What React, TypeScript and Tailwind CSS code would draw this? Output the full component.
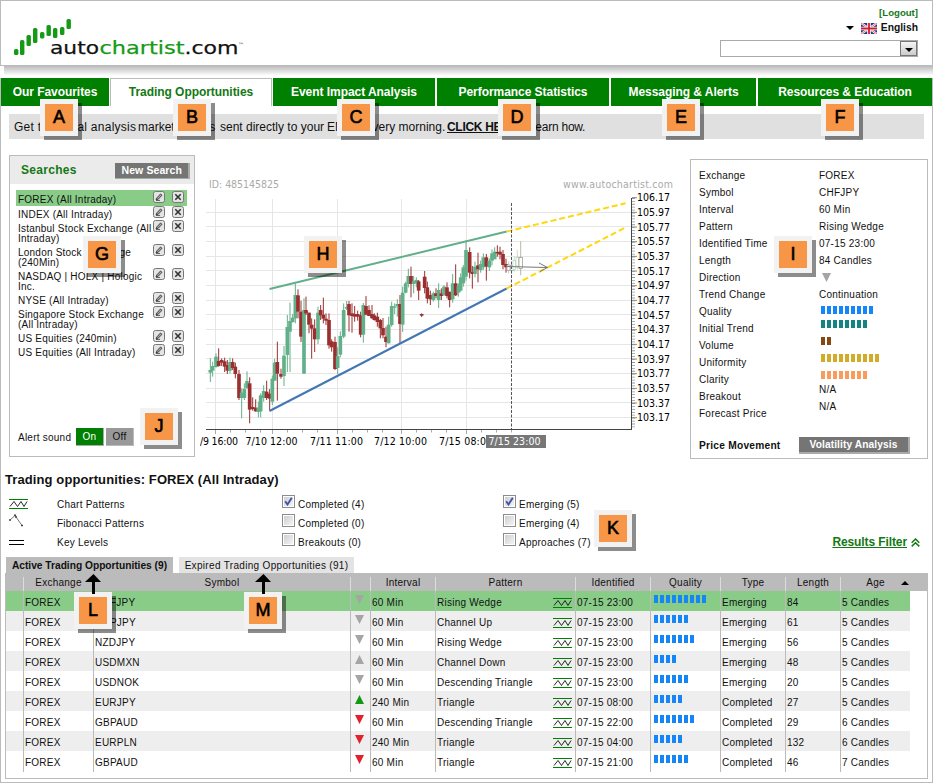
import { ReactNode } from "react";

interface Opportunity {
  symbol: string;
  direction: "up" | "down";
  tone: string;
  interval: string;
  pattern: string;
  identified: string;
  quality: number;
  type: string;
  length: number;
  age: string;
}

const tabs = [
  { label: "Our Favourites", style: "w-[108px] bg-[#008000] pt-px text-white" },
  { label: "Trading Opportunities", style: "ml-px w-[162px] border border-b-0 border-[#bbb] bg-white text-[#147814]" },
  { label: "Event Impact Analysis", style: "ml-px w-[162px] bg-[#008000] pt-px text-white" },
  { label: "Performance Statistics", style: "ml-[2px] w-[172px] bg-[#008000] pt-px text-white" },
  { label: "Messaging & Alerts", style: "ml-[2px] w-[145px] bg-[#008000] pt-px text-white" },
  { label: "Resources & Education", style: "ml-[2px] w-[174px] bg-[#008000] pt-px text-white" },
];

const searches = [
  ["FOREX (All Intraday)"],
  ["INDEX (All Intraday)"],
  ["Istanbul Stock Exchange (All", "Intraday)"],
  ["London Stock Exchange", "(240Min)"],
  ["NASDAQ | HOLX | Hologic", "Inc."],
  ["NYSE (All Intraday)"],
  ["Singapore Stock Exchange", "(All Intraday)"],
  ["US Equities (240min)"],
  ["US Equities (All Intraday)"],
];

const detailLabels = [
  "Exchange", "Symbol", "Interval", "Pattern", "Identified Time", "Length", "Direction", "Trend Change",
  "Quality", "Initial Trend", "Volume", "Uniformity", "Clarity", "Breakout", "Forecast Price",
];

const legend = [
  { icon: "pattern", name: "Chart Patterns", left: "Completed (4)", right: "Emerging (5)", checked: true },
  { icon: "fibonacci", name: "Fibonacci Patterns", left: "Completed (0)", right: "Emerging (4)", checked: false },
  { icon: "levels", name: "Key Levels", left: "Breakouts (0)", right: "Approaches (7)", checked: false },
];

const grey = "#a5a5a5";
const red = "#e3202c";

const opportunities: Opportunity[] = [
  { symbol: "CHFJPY", direction: "down", tone: grey, interval: "60 Min", pattern: "Rising Wedge", identified: "07-15 23:00", quality: 9, type: "Emerging", length: 84, age: "5 Candles" },
  { symbol: "GBPJPY", direction: "down", tone: grey, interval: "60 Min", pattern: "Channel Up", identified: "07-15 23:00", quality: 6, type: "Emerging", length: 61, age: "5 Candles" },
  { symbol: "NZDJPY", direction: "down", tone: grey, interval: "60 Min", pattern: "Rising Wedge", identified: "07-15 23:00", quality: 7, type: "Emerging", length: 56, age: "5 Candles" },
  { symbol: "USDMXN", direction: "up", tone: grey, interval: "60 Min", pattern: "Channel Down", identified: "07-15 23:00", quality: 4, type: "Emerging", length: 48, age: "5 Candles" },
  { symbol: "USDNOK", direction: "down", tone: grey, interval: "60 Min", pattern: "Descending Triangle", identified: "07-15 23:00", quality: 6, type: "Emerging", length: 20, age: "5 Candles" },
  { symbol: "EURJPY", direction: "up", tone: "#119911", interval: "240 Min", pattern: "Triangle", identified: "07-15 08:00", quality: 5, type: "Completed", length: 27, age: "5 Candles" },
  { symbol: "GBPAUD", direction: "down", tone: red, interval: "60 Min", pattern: "Descending Triangle", identified: "07-15 22:00", quality: 7, type: "Completed", length: 29, age: "6 Candles" },
  { symbol: "EURPLN", direction: "down", tone: red, interval: "240 Min", pattern: "Triangle", identified: "07-15 04:00", quality: 5, type: "Completed", length: 132, age: "6 Candles" },
  { symbol: "GBPAUD", direction: "down", tone: red, interval: "60 Min", pattern: "Triangle", identified: "07-15 21:00", quality: 6, type: "Completed", length: 46, age: "7 Candles" },
];

// [x, high, low, body top, body bottom, rising] in thirds of a pixel
const candles = [
  [31, 565, 636, 600, 608, 1], [38, 575, 620, 588, 602, 1], [48, 550, 593, 560, 591, 1], [56, 535, 590, 573, 588, 0],
  [65, 565, 588, 570, 578, 0], [74, 563, 606, 574, 590, 0], [82, 570, 612, 585, 602, 0], [90, 563, 610, 576, 602, 1],
  [98, 565, 600, 576, 594, 0], [106, 578, 625, 590, 612, 0], [117, 600, 690, 612, 684, 0], [125, 655, 745, 668, 684, 1],
  [133, 640, 690, 657, 684, 1], [141, 604, 655, 633, 655, 1], [149, 622, 760, 640, 719, 0], [158, 682, 722, 711, 717, 0],
  [167, 688, 725, 713, 724, 0], [175, 695, 742, 713, 726, 1], [182, 670, 742, 676, 724, 1], [191, 646, 695, 663, 684, 1],
  [200, 632, 690, 665, 684, 0], [209, 657, 722, 671, 686, 0], [217, 617, 705, 626, 695, 1], [224, 566, 632, 578, 632, 1],
  [232, 515, 692, 576, 611, 0], [243, 596, 626, 612, 620, 0], [252, 528, 648, 557, 618, 1], [262, 435, 606, 471, 555, 1],
  [270, 398, 606, 453, 485, 1], [278, 432, 458, 443, 456, 1], [286, 340, 460, 375, 445, 1], [294, 358, 445, 376, 425, 0],
  [303, 392, 516, 425, 500, 0], [312, 385, 612, 420, 611, 1], [318, 380, 435, 420, 430, 0], [327, 428, 490, 428, 464, 0],
  [335, 445, 566, 464, 476, 0], [344, 448, 546, 475, 508, 0], [354, 410, 522, 428, 508, 1], [362, 405, 450, 420, 436, 0],
  [370, 383, 460, 434, 446, 0], [378, 430, 465, 446, 452, 0], [387, 430, 536, 450, 526, 0], [395, 508, 545, 514, 532, 0],
  [405, 500, 600, 516, 597, 0], [413, 532, 612, 558, 594, 1], [421, 484, 562, 498, 554, 1], [431, 400, 505, 420, 500, 1],
  [440, 393, 420, 411, 416, 1], [447, 393, 485, 402, 436, 0], [456, 400, 488, 430, 438, 0], [464, 408, 455, 432, 440, 0],
  [473, 422, 452, 432, 440, 0], [482, 425, 502, 436, 494, 0], [490, 399, 518, 405, 494, 1], [498, 378, 436, 408, 434, 0],
  [507, 406, 438, 420, 438, 0], [516, 405, 446, 432, 445, 0], [523, 430, 452, 436, 450, 0], [532, 428, 470, 440, 456, 0],
  [541, 447, 505, 450, 475, 0], [549, 444, 505, 474, 496, 0], [558, 470, 532, 500, 516, 0], [566, 440, 520, 464, 520, 1],
  [575, 395, 470, 408, 465, 1], [584, 400, 432, 409, 413, 1], [592, 388, 440, 402, 408, 1], [600, 375, 520, 402, 462, 0],
  [608, 350, 486, 368, 464, 1], [617, 335, 370, 340, 368, 1], [625, 296, 352, 318, 342, 1], [633, 290, 382, 318, 342, 0],
  [641, 318, 370, 333, 342, 1], [649, 322, 352, 330, 340, 1], [656, 330, 390, 334, 362, 0], [665, 430, 441, 432, 437, 0],
  [674, 303, 370, 320, 354, 0], [682, 335, 400, 352, 386, 0], [691, 362, 405, 375, 388, 0], [700, 365, 395, 370, 390, 1],
  [708, 355, 385, 370, 378, 0], [716, 340, 414, 360, 390, 1], [724, 355, 390, 370, 378, 0], [732, 345, 378, 350, 375, 1],
  [741, 337, 385, 352, 378, 0], [749, 370, 412, 365, 390, 0], [758, 312, 398, 340, 388, 1], [767, 283, 378, 340, 376, 0],
  [775, 340, 380, 347, 368, 1], [782, 310, 365, 322, 362, 1], [790, 285, 350, 292, 340, 1], [798, 212, 332, 240, 320, 1],
  [809, 232, 325, 246, 308, 0], [817, 288, 356, 306, 312, 0], [825, 275, 322, 290, 312, 1], [834, 248, 337, 286, 298, 0],
  [842, 272, 308, 282, 300, 1], [850, 250, 300, 262, 292, 1], [859, 252, 332, 262, 290, 0], [868, 265, 303, 272, 292, 1],
  [876, 238, 286, 250, 272, 1], [884, 232, 266, 245, 268, 1], [892, 226, 260, 246, 250, 0], [900, 230, 268, 245, 254, 0],
  [909, 240, 298, 252, 285, 0], [918, 266, 308, 282, 292, 0],
];

const prices = [
  "106.17", "105.97", "105.77", "105.57", "105.37", "105.17", "104.97", "104.77",
  "104.57", "104.37", "104.17", "103.97", "103.77", "103.57", "103.37", "103.17",
];

const callouts = [
  { letter: "A", place: "left-[40px] top-[99px]" },
  { letter: "B", place: "left-[173px] top-[99px]" },
  { letter: "C", place: "left-[337px] top-[99px]" },
  { letter: "D", place: "left-[498px] top-[99px]" },
  { letter: "E", place: "left-[662px] top-[99px]" },
  { letter: "F", place: "left-[821px] top-[99px]" },
  { letter: "G", place: "left-[83px] top-[236px]" },
  { letter: "H", place: "left-[304px] top-[236px]" },
  { letter: "I", place: "left-[774px] top-[236px]" },
  { letter: "J", place: "left-[140px] top-[408px]" },
  { letter: "K", place: "left-[594px] top-[510px]" },
  { letter: "L", place: "left-[74px] top-[592px]" },
  { letter: "M", place: "left-[244px] top-[592px]" },
];

function Logo() {
  const bars = [[14, 49, 5], [20, 40, 14], [26.5, 35, 10], [33, 28, 14], [40, 32, 5.5], [46.5, 25, 10], [53, 28, 9], [60, 27, 7], [66.5, 19, 9]];
  return (
    <svg width="245" height="64" className="block" fontFamily="'DejaVu Sans', sans-serif" fontSize="18.5">
      {bars.map(([x, y, h], index) => (
        <rect key={index} x={x - 1} y={y - 1} width="4.4" height={h + 1} rx="1.6" fill="#149a14" />
      ))}
      <text x="49" y="53" textLength="49" lengthAdjust="spacingAndGlyphs" fill="#111" stroke="#111" strokeWidth="0.25">auto</text>
      <text x="98.5" y="53" textLength="85" lengthAdjust="spacingAndGlyphs" fill="#149a14" stroke="#149a14" strokeWidth="0.25">chartist</text>
      <text x="183.5" y="53" textLength="54" lengthAdjust="spacingAndGlyphs" fill="#111" stroke="#111" strokeWidth="0.25">.com</text>
      <text x="237" y="45.5" fontSize="6" fill="#333">™</text>
    </svg>
  );
}

function Flag() {
  return (
    <svg width="16" height="11" viewBox="0 0 16 11">
      <rect width="16" height="11" fill="#26378a" />
      <path d="M0 0L16 11M16 0L0 11" stroke="#fff" strokeWidth="2.2" />
      <path d="M0 0L16 11M16 0L0 11" stroke="#d8303c" strokeWidth="0.7" />
      <path d="M8 0V11M0 5.5H16" stroke="#fff" strokeWidth="3.6" />
      <path d="M8 0V11M0 5.5H16" stroke="#d0202c" strokeWidth="1.8" />
    </svg>
  );
}

function PatternIcon() {
  return (
    <svg width="19" height="10" viewBox="0 0 19 10" className="block" fill="none">
      <path d="M0 .5H19M0 9.5H19" stroke="#008000" />
      <path d="M1 7.5L5 2.5L8.5 7.5L12 2.5L15 7.5L18 2.5" stroke="#111" strokeWidth="0.9" />
    </svg>
  );
}

function LegendIcon({ name }: { name: string }) {
  if (name === "pattern") return <PatternIcon />;
  if (name === "fibonacci")
    return (
      <svg width="15" height="13" viewBox="0 0 15 13" fill="none" className="-mt-1">
        <path d="M1 6L6 1.5L13 11.5" stroke="#777" />
        <path d="M0 6h2M5 1.2h2M6 3h2M12 11.5h2" stroke="#444" strokeWidth="1.4" />
      </svg>
    );
  return (
    <svg width="15" height="6" viewBox="0 0 15 6" className="mt-0.5">
      <path d="M0 .5H15M0 4.5H15" stroke="#000" />
    </svg>
  );
}

function Direction({ direction, tone }: { direction: "up" | "down"; tone: string }) {
  return (
    <svg width="9" height="9" viewBox="0 0 9 9" className="block">
      <path d={direction === "up" ? "M0 9H9L4.5 0Z" : "M0 0H9L4.5 9Z"} fill={tone} />
    </svg>
  );
}

function Bars({ count, color }: { count: number; color: string }) {
  return (
    <div className="flex gap-[2px]">
      {Array.from({ length: count }, (_, index) => (
        <span key={index} className={`h-2 w-1 ${color}`} />
      ))}
    </div>
  );
}

function Checkbox({ checked }: { checked: boolean }) {
  return (
    <span className="mt-px flex h-[13px] w-[13px] items-center justify-center border border-[#8c8c8c] bg-white p-px">
      <span className="h-full w-full bg-linear-to-br from-[#cfcfd2] to-[#f4f4f4]">
        {checked && (
          <svg width="9" height="9" viewBox="0 0 9 9" fill="none">
            <path d="M1.2 4.2L3.5 7.5L7.8 .8" stroke="#4055a8" strokeWidth="1.9" />
          </svg>
        )}
      </span>
    </span>
  );
}

function RowAction({ children }: { children: ReactNode }) {
  return (
    <svg width="12" height="12" viewBox="0 0 12 12" fill="none" className="block">
      <rect x=".5" y=".5" width="11" height="11" rx="2" fill="#e4e4e4" stroke="#777" />
      {children}
    </svg>
  );
}

function Chart() {
  return (
    <svg width="485" height="285" viewBox="0 0 485 285" className="block" fontFamily="'DejaVu Sans Condensed', 'DejaVu Sans', sans-serif" fontSize="10.5">
      <text x="9" y="18" fill="#aaa" textLength="70">ID: 485145825</text>
      <text x="363" y="18" fill="#aaa" textLength="110">www.autochartist.com</text>

      {/* Grid */}
      <g stroke="#e6e6e6" shapeRendering="crispEdges">
        {prices.slice(1).map((price, index) => (
          <line key={price} x1="6" x2="431" y1={42.3 + index * 14.667} y2={42.3 + index * 14.667} />
        ))}
        {[15.5, 72.5, 137.5, 201.5, 266.5].map((x) => (
          <line key={x} x1={x} x2={x} y1="29" y2="259" />
        ))}
      </g>

      {/* Candles */}
      <g transform="scale(0.33333)">
        {candles.map(([x, high, low, top, bottom, rising]) => (
          <g key={x} fill={rising ? "#62b08a" : "#99302f"}>
            <rect x={x - 1.5} y={high} width="3" height={low - high} />
            <rect x={x - 5.5} y={top} width="11" height={bottom - top} />
          </g>
        ))}
        <g fill="#fff" strokeWidth="2">
          <path d="M926 275V310M935 280V310" stroke="#aaa" />
          <rect x="921" y="285" width="9" height="16" stroke="#999" />
          <rect x="932" y="287" width="8" height="14" stroke="#999" />
          <path d="M943 260V305M952 240V300" stroke="#a9d5bd" />
          <rect x="939" y="272" width="8" height="26" stroke="#a9d5bd" />
          <rect x="948" y="262" width="8" height="26" stroke="#a9d5bd" />
          <path d="M962 214V316" stroke="#a08f82" />
          <rect x="957" y="262" width="10" height="34" stroke="#9a8a7e" />
        </g>
      </g>

      {/* Wedge and its projection */}
      <g fill="none" strokeWidth="2">
        <path d="M69.5 119L306.7 61.5" stroke="#62b08a" />
        <path d="M69.5 241L306.7 118.5" stroke="#4377b3" />
        <path d="M306.7 61.5L425.5 33.3M306.7 118.5L425.5 57.5" stroke="#ffd70f" strokeDasharray="6 3" />
      </g>
      <path d="M311.5 33V259" stroke="#555" strokeDasharray="3 1.5" />
      <path d="M306 96.5L347 97.5M339 93L347.5 97.5L340 101.5" stroke="#777" fill="none" />

      {/* Axes */}
      <path d="M6 259.5H431.5V28" stroke="#444" fill="none" shapeRendering="crispEdges" />
      <path d="M432 28.3H435" stroke="#777" />
      <path d="M433.5 28V259" stroke="#999" strokeWidth="3" strokeDasharray="0.8 2.13" />
      {[15.5, 72.5, 137.5, 201.5, 266.5].map((x) => (
        <path key={x} d={`M${x} 260v4M${x + 15} 260v2.5M${x + 30} 260v2.5M${x + 45} 260v2.5`} stroke="#aaa" fill="none" />
      ))}
      {prices.map((price, index) => (
        <g key={price}>
          <path d={`M432 ${27.7 + index * 14.667}h5`} stroke="#888" />
          <text x="437" y={31.3 + index * 14.667} textLength="33">{price}</text>
        </g>
      ))}
      <text x="0" y="275" textLength="38">/9 16:00</text>
      <text x="45.5" y="275" textLength="52">7/10 12:00</text>
      <text x="110" y="275" textLength="53">7/11 11:00</text>
      <text x="174" y="275" textLength="53">7/12 10:00</text>
      <text x="239" y="275" textLength="47">7/15 08:0</text>
      <rect x="286" y="265" width="60" height="13" fill="#777" />
      <text x="288.5" y="275" textLength="52" fill="#fff">7/15 23:00</text>
    </svg>
  );
}

function SearchPanel() {
  return (
    <section className="mt-4 ml-2 flex h-[302px] w-[186px] flex-col border border-[#bbb]">
      <div className="flex h-7 items-center justify-between bg-[#ebebeb] pr-1 pl-[11px]">
        <h2 className="text-[12px] font-bold tracking-[0.3px] text-[#147814]">Searches</h2>
        <button className="mt-px h-4 border-r-2 border-b border-[#aaa] bg-[#757575] px-[6px] text-[10.5px] leading-[14px] font-bold tracking-[0.1px] text-white">
          New Search
        </button>
      </div>
      <ul className="mt-[6px] ml-[6px] w-[171px] text-[10px] leading-[10px] tracking-[0.22px]">
        {searches.map((lines, index) => (
          <li
            key={index}
            className={`flex justify-between pr-[3px] pl-[2px] ${
              index === 0 ? "h-4 bg-[#88cc88] pt-px" : lines.length > 1 ? "h-6" : "h-[14px]"
            }`}
          >
            <div className="w-[135px] pt-1 whitespace-nowrap">
              {lines.map((line) => (
                <div key={line}>{line}</div>
              ))}
            </div>
            <div className="flex gap-[7px]">
              <RowAction>
                <path d="M3 9L4 6.8L7.5 3L9 4.3L5.4 8Z" stroke="#333" fill="#aaa" strokeWidth=".9" />
                <path d="M3 9.4H7" stroke="#333" strokeWidth=".8" />
              </RowAction>
              <RowAction>
                <path d="M3.3 3.3L8.7 8.7M8.7 3.3L3.3 8.7" stroke="#333" strokeWidth="1.6" />
              </RowAction>
            </div>
          </li>
        ))}
      </ul>
      <div className="mt-auto mb-[10px] flex items-center pl-2 text-[10px] tracking-[0.24px]">
        <span className="w-[58px]">Alert sound</span>
        <button className="h-[18px] w-[28px] border-r border-b border-[#aaa] bg-[#008000] text-white">On</button>
        <button className="ml-[2px] h-[18px] w-[28px] border-r border-b border-[#bbb] bg-[#999]">Off</button>
      </div>
    </section>
  );
}

function DetailsPanel() {
  return (
    <aside className="mt-5 ml-[5px] h-[300px] w-[238px] border border-[#bbb] pl-2 text-[10px] tracking-[0.24px]">
      <div className="flex pt-[7px]">
        <div className="w-[120px] leading-[17px]">
          {detailLabels.map((label) => (
            <div key={label}>{label}</div>
          ))}
        </div>
        <div className="leading-[17px]">
          <div>FOREX</div>
          <div>CHFJPY</div>
          <div>60 Min</div>
          <div>Rising Wedge</div>
          <div>07-15 23:00</div>
          <div>84 Candles</div>
          <div className="flex h-[17px] items-center pl-[3px]">
            <Direction direction="down" tone={grey} />
          </div>
          <div>Continuation</div>
          <div className="flex h-[14px] items-center pl-[2px]"><Bars count={9} color="bg-[#1486fa]" /></div>
          <div className="flex h-[14px] items-center pl-[2px]"><Bars count={8} color="bg-[#138484]" /></div>
          <div className="flex h-5 items-center pl-[2px]"><Bars count={2} color="bg-[#854a12]" /></div>
          <div className="flex h-[14px] items-center pl-[2px]"><Bars count={10} color="bg-[#d2ac28]" /></div>
          <div className="flex h-5 items-center pl-[2px]"><Bars count={8} color="bg-[#fa9a5c]" /></div>
          <div className="-mt-1">N/A</div>
          <div>N/A</div>
        </div>
      </div>
      <div className="mt-[15px] flex items-center font-bold">
        <span className="w-[100px] text-[10.2px]">Price Movement</span>
        <button className="h-[17px] w-[111px] border-r-2 border-b-2 border-[#aaa] bg-[#757575] text-[10.2px] leading-[14px] tracking-[0.1px] text-white">
          Volatility Analysis
        </button>
      </div>
    </aside>
  );
}

const columns = "grid grid-cols-[17px_70px_257px_20px_65px_140px_75px_70px_65px_55px_70px]";
const cell = "border-l border-[#bbb] pl-px pt-[2px]";
const headings = ["Exchange", "Symbol", "", "Interval", "Pattern", "Identified", "Quality", "Type", "Length", "Age"];

function ResultsTable() {
  return (
    <div className="ml-1 h-[206px] w-[923px] border border-[#bbb] text-[10px] leading-[19px] tracking-[0.24px]">
      <div className={`${columns} relative h-[17px] bg-[#bbb]`}>
        <span />
        {headings.map((heading, index) => (
          <span key={index} className="mt-[3px] border-l border-[#ddd] text-center leading-[12px]">
            {heading}
          </span>
        ))}
        <svg width="8" height="4" className="absolute top-[7px] right-[18px]">
          <path d="M0 4H8L4 0Z" />
        </svg>
      </div>
      {opportunities.map((row, index) => (
        <div
          key={index}
          className={`${columns} h-5 w-[904px] ${index === 0 ? "bg-[#88cc88]" : index % 2 ? "bg-[#eee]" : "bg-white"}`}
        >
          <span />
          <span className={cell}>FOREX</span>
          <span className={cell}>{row.symbol}</span>
          <span className="border-l border-[#bbb] pt-1 pl-1">
            <Direction direction={row.direction} tone={row.tone} />
          </span>
          <span className={cell}>{row.interval}</span>
          <span className={`${cell} flex justify-between pr-[3px]`}>
            {row.pattern}
            <span className="mt-[5px]">
              <PatternIcon />
            </span>
          </span>
          <span className={cell}>{row.identified}</span>
          <span className="border-l border-[#bbb] pt-1 pl-[3px]">
            <Bars count={row.quality} color="bg-[#1486fa]" />
          </span>
          <span className={cell}>{row.type}</span>
          <span className={cell}>{row.length}</span>
          <span className={cell}>{row.age}</span>
        </div>
      ))}
    </div>
  );
}

export default function App() {
  return (
    <div className="relative h-[783px] w-[933px] overflow-hidden bg-white font-['Liberation_Sans',Arial,sans-serif] text-[#111]">
      {/* Header */}
      <header className="flex h-[66px] justify-between border border-[#bbb]">
        <Logo />
        <div className="mr-[14px] flex w-[198px] flex-col items-end pt-[5px] text-[11px] font-bold">
          <a className="h-[14px] text-[9.6px] leading-[14px] text-[#147814]">[Logout]</a>
          <div className="flex h-4 items-center text-[10.3px]">
            <svg width="8" height="4" className="mr-[7px]">
              <path d="M0 0H8L4 4Z" />
            </svg>
            <Flag />
            <span className="ml-1">English</span>
          </div>
          <div className="mt-[4px] flex h-[17px] w-[198px] justify-end border border-[#aaa]">
            <span className="flex w-[17px] items-end justify-center border border-[#777] bg-linear-to-b from-[#f4f4f4] to-[#ccc] pb-[3px]">
              <svg width="8" height="4">
                <path d="M0 0H8L4 4Z" />
              </svg>
            </span>
          </div>
        </div>
      </header>
      <div className="ml-1 h-3 bg-linear-to-b from-[#bbb] to-white to-80%" />

      <main className="h-[705px] border-x border-b border-[#bbb]">
        {/* Navigation */}
        <nav className="-mx-px flex h-7 pl-px text-[12px] leading-[27px] font-bold tracking-[-0.05px]">
          {tabs.map((tab) => (
            <a key={tab.label} className={`shrink-0 text-center whitespace-nowrap ${tab.style}`}>
              {tab.label}
            </a>
          ))}
        </nav>
        <p className="mt-2 ml-2 flex h-[25px] w-[915px] bg-[#e0e0e0] pl-[5px] text-[12px] leading-[26px] whitespace-nowrap">
          <span className="w-[124px] tracking-[0.25px]">Get technical analysis </span>
          <span className="w-[82px]">market reports </span>
          <span className="w-[107px]">sent directly to your </span>
          <span className="w-[120px]">EMAIL every morning. </span>
          <a className="mr-[3px] font-bold tracking-[-0.3px] underline">CLICK HERE</a>
          <span className="tracking-[-0.25px]"> to learn how.</span>
        </p>

        <div className="flex h-[318px]">
          <SearchPanel />
          <div className="mt-[31px] ml-[5px] w-[485px]">
            <Chart />
          </div>
          <DetailsPanel />
        </div>

        {/* Filters */}
        <section className="relative h-[100px] pl-1">
          <h1 className="pt-[15px] text-[13px] leading-4 font-bold tracking-[0.1px]">Trading opportunities: FOREX (All Intraday)</h1>
          <div className="mt-[6px] text-[10px] leading-[19px] tracking-[0.24px]">
            {legend.map((row) => (
              <div key={row.icon} className="flex h-[19px]">
                <span className="flex w-[52px] items-center pl-1">
                  <LegendIcon name={row.icon} />
                </span>
                <span className="w-[225px] pt-px">{row.name}</span>
                <span className="flex w-[221px] gap-[3px]">
                  <Checkbox checked={row.checked} />
                  <span className="pt-px">{row.left}</span>
                </span>
                <span className="flex gap-[3px]">
                  <Checkbox checked={row.checked} />
                  <span className="pt-px">{row.right}</span>
                </span>
              </div>
            ))}
          </div>
          <div className="absolute top-[76px] right-[12px] flex items-center gap-1 text-[12px] font-bold tracking-[-0.1px] text-[#147814]">
            <a className="underline">Results Filter</a>
            <svg width="9" height="9" viewBox="0 0 9 9" fill="none" stroke="#147814" strokeWidth="1.5">
              <path d="M.7 4.7L4.5 1L8.3 4.7M.7 8.4L4.5 4.7L8.3 8.4" />
            </svg>
          </div>
        </section>

        {/* Results */}
        <div className="ml-[5px] flex h-4 text-[10px] leading-[17px]">
          <span className="w-[167px] bg-[#bbb] text-center text-[10.2px] font-bold whitespace-nowrap">Active Trading Opportunities (9)</span>
          <span className="ml-[6px] w-[175px] bg-[#e3e3e3] text-center tracking-[0.32px] whitespace-nowrap">
            Expired Trading Opportunities (91)
          </span>
        </div>
        <ResultsTable />
      </main>

      {/* Callouts */}
      {callouts.map(({ letter, place }) => (
        <div
          key={letter}
          className={`absolute flex h-[37px] w-[38px] items-center justify-center border-[5px] border-[#f2f2f2] bg-[#f79646] text-[18px] text-black shadow-[4px_4px_0_rgba(0,0,0,0.45)] [-webkit-text-stroke:0.6px_black] ${place}`}
        >
          {letter}
        </div>
      ))}
      <svg width="16" height="20" className="absolute top-[574px] left-[85px]">
        <path d="M8.5 0L16 8H10V20H7V8H0Z" />
      </svg>
      <svg width="16" height="20" className="absolute top-[574px] left-[255px]">
        <path d="M8.5 0L16 8H10V20H7V8H0Z" />
      </svg>
    </div>
  );
}
